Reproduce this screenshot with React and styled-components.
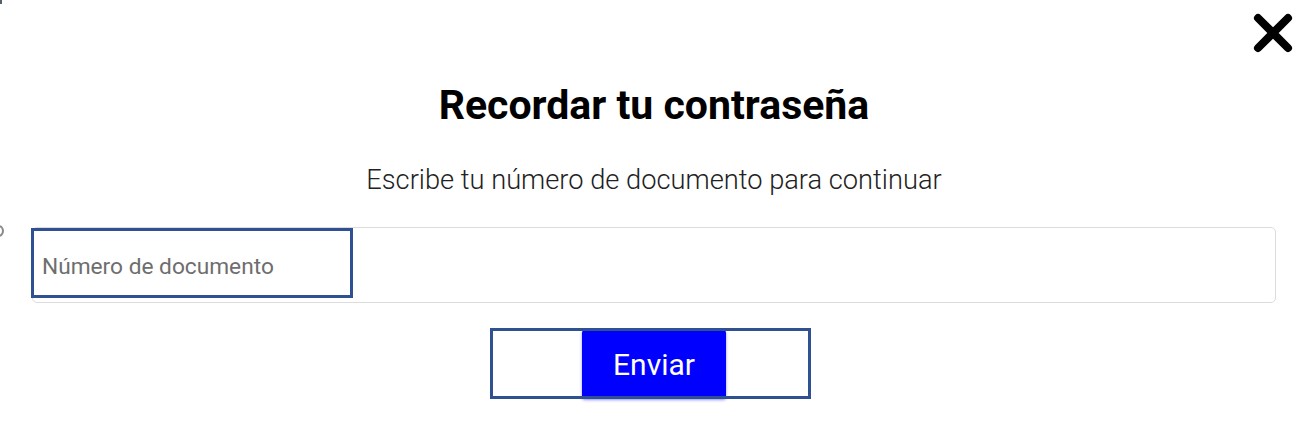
import React from "react";
import styled, { createGlobalStyle } from "styled-components";

const Global = createGlobalStyle`
  html, body { margin: 0; padding: 0; background: #fff; }
  body { font-family: Roboto, "Liberation Sans", Arial, sans-serif; }
  * { box-sizing: border-box; }
`;

const Modal = styled.div`
  position: relative;
  width: 1299px;
  height: 438px;
  overflow: hidden;
  padding: 13px 6px 0 32px;
  background: #fff;
`;

const CloseRow = styled.div`
  display: flex;
  justify-content: flex-end;
  height: 40px;
`;

const CloseButton = styled.button`
  width: 40px;
  height: 40px;
  padding: 0;
  border: 0;
  background: transparent;
  cursor: pointer;
  display: block;
`;

const Body = styled.div`
  margin-right: 17px;
  display: flex;
  flex-direction: column;
  align-items: center;
`;

const Title = styled.h2`
  margin: 28px 0 0;
  font-size: 41px;
  line-height: 48px;
  font-weight: 700;
  color: #000;
`;

const Subtitle = styled.p`
  margin: 35px 0 0;
  font-size: 27.25px;
  line-height: 32px;
  font-weight: 300;
  color: #222;
`;

const Form = styled.form`
  align-self: stretch;
  margin-top: 31px;
  display: flex;
  flex-direction: column;
  align-items: center;
  gap: 27px;
`;

const InputWrap = styled.div`
  position: relative;
  align-self: stretch;
`;

const Input = styled.input`
  display: block;
  width: 100%;
  height: 76px;
  border: 1px solid #dcdcdc;
  border-radius: 5px;
  padding: 2px 9px 0;
  font-family: Roboto, "Liberation Sans", Arial, sans-serif;
  font-size: 22.7px;
  color: #333;
  outline: none;
  &::placeholder { color: #6e6e6e; }
`;

const ButtonWrap = styled.div`
  position: relative;
`;

const SendButton = styled.button`
  display: block;
  width: 144px;
  height: 69px;
  border: 0;
  border-radius: 3px;
  background: #0000ff;
  color: #fff;
  font-family: Roboto, "Liberation Sans", Arial, sans-serif;
  font-size: 30px;
  font-weight: 400;
  box-shadow: 0 1px 3px rgba(0, 0, 255, 0.45);
  cursor: pointer;
`;

const Highlight = styled.div`
  position: absolute;
  left: ${(p) => p.$left}px;
  top: ${(p) => p.$top}px;
  width: ${(p) => p.$w}px;
  height: ${(p) => p.$h}px;
  border: 3px solid #2f5191;
  pointer-events: none;
`;

const StrayRing = styled.div`
  position: absolute;
  left: -7px;
  top: 225px;
  width: 11px;
  height: 12px;
  border: 2px solid #8a8a8a;
  border-radius: 50%;
`;

const StrayMark = styled.div`
  position: absolute;
  left: 0;
  top: 0;
  width: 2px;
  height: 4px;
  background: #55606b;
`;

export default function App() {
  return (
    <>
      <Global />
      <Modal>
        <StrayMark />
        <StrayRing />
        <CloseRow>
          <CloseButton aria-label="Cerrar" type="button">
            <svg width="40" height="40" viewBox="0 0 40 40">
              <path
                d="M5 5 L35 35 M35 5 L5 35"
                stroke="#000"
                strokeWidth="8"
                strokeLinecap="round"
                fill="none"
              />
            </svg>
          </CloseButton>
        </CloseRow>
        <Body>
          <Title>Recordar tu contraseña</Title>
          <Subtitle>Escribe tu número de documento para continuar</Subtitle>
          <Form onSubmit={(e) => e.preventDefault()}>
            <InputWrap>
              <Input placeholder="Número de documento" />
              <Highlight $left={-1} $top={1} $w={322} $h={70} />
            </InputWrap>
            <ButtonWrap>
              <SendButton type="submit">Enviar</SendButton>
              <Highlight $left={-92} $top={-2} $w={321} $h={71} />
            </ButtonWrap>
          </Form>
        </Body>
      </Modal>
    </>
  );
}
